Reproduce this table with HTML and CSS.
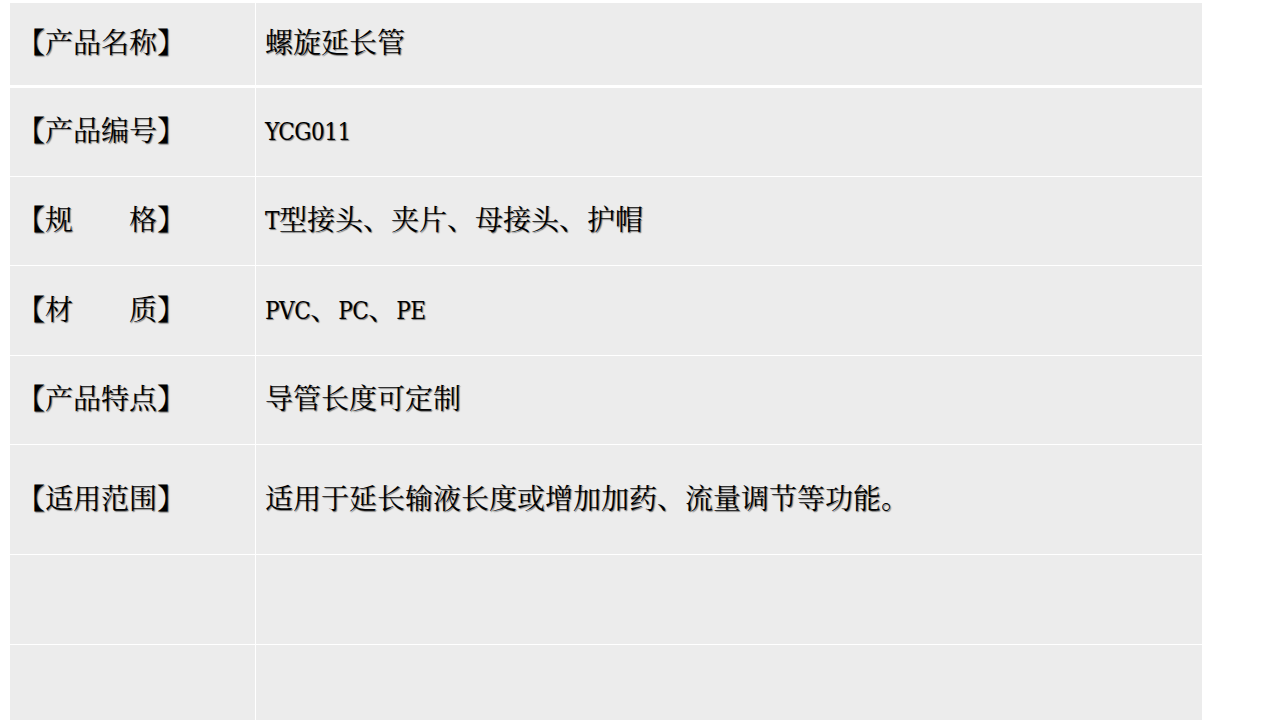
FILE: index.html
```html
<!DOCTYPE html>
<html lang="zh-CN">
<head>
<meta charset="utf-8">
<title>螺旋延长管</title>
<link rel="stylesheet" href="styles.css">
</head>
<body>
<div class="page">
  <div class="spec">
    <div class="cell label first">【产品名称】</div>
    <div class="cell value first">螺旋延长管</div>
    <div class="cell label">【产品编号】</div>
    <div class="cell value"><span class="lat">YCG011</span></div>
    <div class="cell label">【规　　格】</div>
    <div class="cell value"><span class="lat">T</span>型接头、夹片、母接头、护帽</div>
    <div class="cell label">【材　　质】</div>
    <div class="cell value"><span class="lat">PVC</span>、<span class="lat">PC</span>、<span class="lat">PE</span></div>
    <div class="cell label">【产品特点】</div>
    <div class="cell value">导管长度可定制</div>
    <div class="cell label">【适用范围】</div>
    <div class="cell value">适用于延长输液长度或增加加药、流量调节等功能。</div>
    <div class="cell label"></div>
    <div class="cell value"></div>
    <div class="cell label"></div>
    <div class="cell value"></div>
  </div>
</div>
</body>
</html>
```
FILE: styles.css
```css
html, body {
  margin: 0;
  padding: 0;
  background: #ffffff;
}

.page {
  padding: 3px 0 0 10px;
  height: 720px;
  overflow: hidden;
  box-sizing: border-box;
}

.spec {
  display: grid;
  width: 1192px;
  grid-template-columns: 245px 946px;
  grid-template-rows: 84px 88px 88px 89px 88px 109px 89px 89px;
  column-gap: 1px;
  row-gap: 1px;
  background: #ffffff;
  font-family: "Liberation Serif", "Noto Serif CJK SC", "Noto Sans CJK SC", serif;
  font-size: 28px;
  color: #000000;
  text-shadow: 1px 1px 1px rgba(0, 0, 0, 0.5);
}

.cell {
  background: #ececec;
  display: flex;
  align-items: center;
  line-height: 1;
  white-space: nowrap;
}

.cell.first {
  margin-bottom: 2px;
}

.label {
  padding-left: 7px;
}

.value {
  padding-left: 9px;
}

.lat {
  font-family: "DejaVu Serif Condensed", "Liberation Serif", serif;
  font-size: 24px;
  letter-spacing: -0.5px;
}
```
